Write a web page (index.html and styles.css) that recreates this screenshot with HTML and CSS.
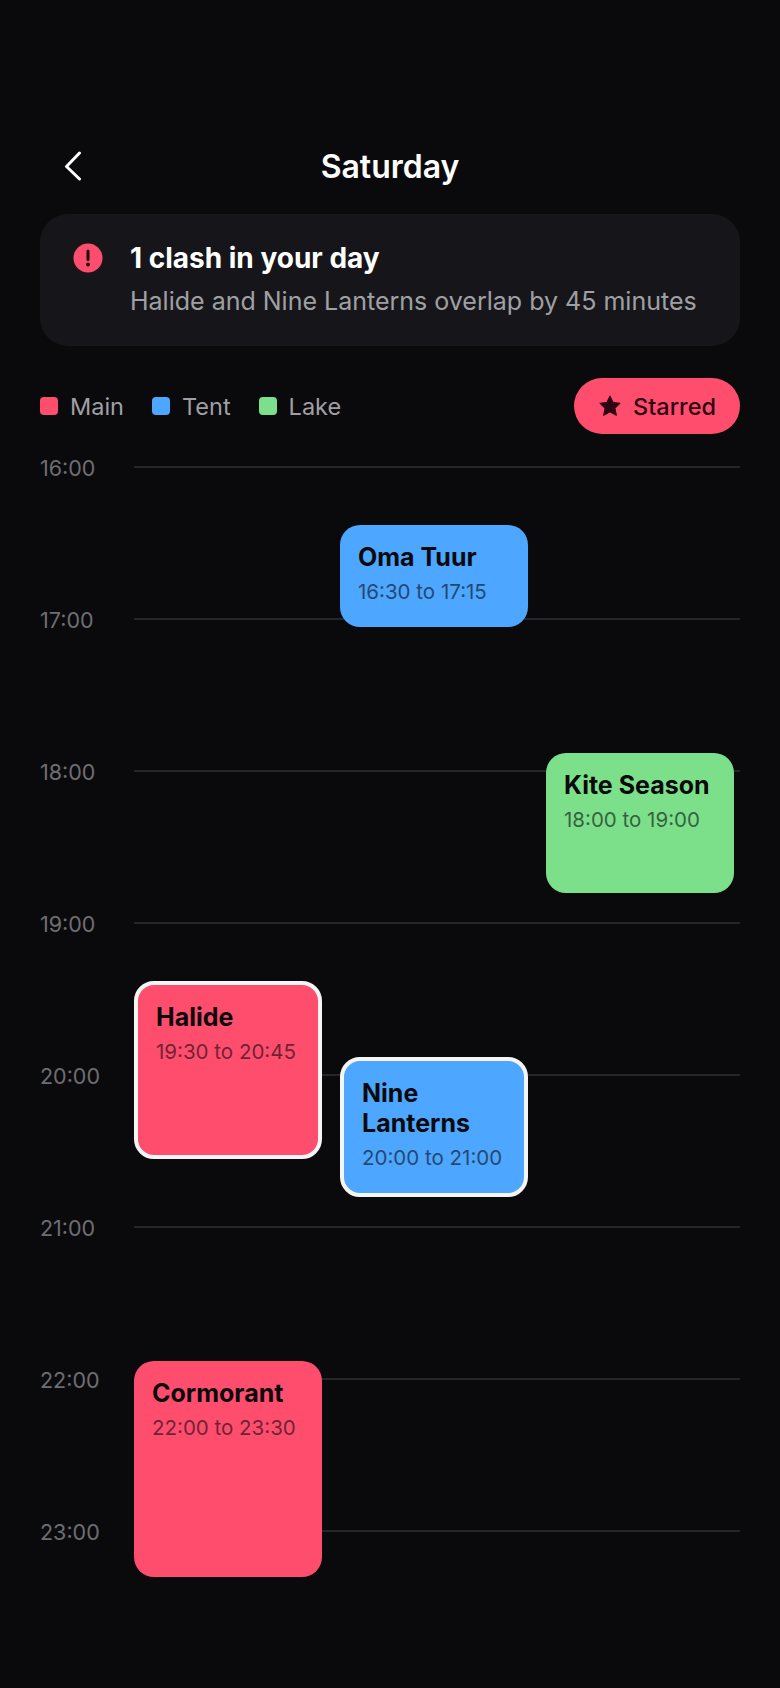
FILE: index.html
```html
<!DOCTYPE html>
<html lang="en">
<head>
<meta charset="utf-8">
<title>Saturday</title>
<link rel="stylesheet" href="styles.css">
</head>
<body>
<main class="screen">
  <header class="topbar">
    <button class="back" aria-label="Back">
      <svg width="30" height="30" viewBox="0 0 30 30" fill="none"><path d="M19.5 2 6.5 15.5l13 12.5" stroke="#fff" stroke-width="3" stroke-linecap="round" stroke-linejoin="round"/></svg>
    </button>
    <h1 class="title">Saturday</h1>
  </header>
  <section class="alert">
    <svg class="alert-icon" width="32" height="32" viewBox="0 0 32 32"><circle cx="16" cy="16" r="14.5" fill="#ff4d6d"/><path d="M16 9v8.5" stroke="#1a0a10" stroke-width="3" stroke-linecap="round"/><circle cx="16" cy="22.5" r="2" fill="#1a0a10"/></svg>
    <div class="alert-text">
      <div class="alert-title">1 clash in your day</div>
      <div class="alert-sub">Halide and Nine Lanterns overlap by 45 minutes</div>
    </div>
  </section>
  <section class="filters">
    <div class="legend"><i class="dot main"></i><span>Main</span></div>
    <div class="legend"><i class="dot tent"></i><span>Tent</span></div>
    <div class="legend"><i class="dot lake"></i><span>Lake</span></div>
    <button class="starred">
      <svg width="24" height="24" viewBox="0 0 24 24"><path d="M12 1.8l3.1 6.6 7.1.9-5.2 5 1.4 7.1-6.4-3.5-6.4 3.5 1.4-7.1-5.2-5 7.1-.9z" fill="#2f0514" stroke="#2f0514" stroke-width="1" stroke-linejoin="round"/></svg>
      <span>Starred</span>
    </button>
  </section>
  <section class="timeline">
    <div class="hour"><span class="label">16:00</span><i class="rule"></i></div>
    <div class="hour"><span class="label">17:00</span><i class="rule"></i></div>
    <div class="hour"><span class="label">18:00</span><i class="rule"></i></div>
    <div class="hour"><span class="label">19:00</span><i class="rule"></i></div>
    <div class="hour"><span class="label">20:00</span><i class="rule"></i></div>
    <div class="hour"><span class="label">21:00</span><i class="rule"></i></div>
    <div class="hour"><span class="label">22:00</span><i class="rule"></i></div>
    <div class="hour"><span class="label">23:00</span><i class="rule"></i></div>

    <article class="event tent" style="top:68.5px;height:102px;left:340px"><h2>Oma Tuur</h2><p>16:30 to 17:15</p></article>
    <article class="event lake" style="top:296.5px;height:140px;left:546px"><h2>Kite Season</h2><p>18:00 to 19:00</p></article>
    <article class="event main clash" style="top:524.5px;height:178px;left:134px"><h2>Halide</h2><p>19:30 to 20:45</p></article>
    <article class="event tent clash" style="top:600.5px;height:140px;left:340px"><h2>Nine Lanterns</h2><p>20:00 to 21:00</p></article>
    <article class="event main" style="top:904.5px;height:216px;left:134px"><h2>Cormorant</h2><p>22:00 to 23:30</p></article>
  </section>
</main>
</body>
</html>
```
FILE: styles.css
```css
* { box-sizing: border-box; }
html, body { margin: 0; padding: 0; }
body {
  background: #0a0a0d;
  font-family: Inter, "Liberation Sans", sans-serif;
  color: #fff;
}
.screen {
  width: 780px;
  height: 1688px;
  padding: 142px 40px 0;
  overflow: hidden;
}
.topbar {
  position: relative;
  height: 48px;
  display: flex;
  align-items: center;
  justify-content: center;
}
.back {
  position: absolute;
  left: 20px;
  top: 9px;
  width: 30px;
  height: 30px;
  padding: 0;
  border: 0;
  background: none;
  line-height: 0;
}
.title {
  margin: 2px 0 0;
  font-size: 32px;
  font-weight: 600;
  line-height: 48px;
}
.alert {
  margin-top: 24px;
  height: 132px;
  border-radius: 28px;
  background: #16161a;
  padding: 28px 32px;
  display: flex;
  gap: 26px;
}
.alert-icon { flex: none; }
.alert-title {
  font-size: 28px;
  font-weight: 700;
  line-height: 32px;
}
.alert-sub {
  margin-top: 11px;
  font-size: 25px;
  line-height: 32px;
  color: #a0a0a4;
}
.filters {
  margin-top: 32px;
  height: 56px;
  display: flex;
  align-items: center;
  gap: 28px;
}
.legend {
  display: flex;
  align-items: center;
  gap: 12px;
  font-size: 23.5px;
  color: #a0a0a4;
}
.dot {
  width: 18px;
  height: 18px;
  border-radius: 4px;
}
.dot.main { background: #ff4d6d; }
.dot.tent { background: #4da6ff; }
.dot.lake { background: #7ce08a; }
.starred {
  margin-left: auto;
  height: 56px;
  padding: 0 24px;
  border: 0;
  border-radius: 28px;
  background: #ff4d6d;
  color: #2f0514;
  font: 500 23.5px Inter, "Liberation Sans", sans-serif;
  display: flex;
  align-items: center;
  gap: 11px;
}
.timeline {
  position: relative;
  margin: 0 -40px;
  padding: 32px 40px 0;
}
.hour {
  height: 152px;
  display: flex;
  align-items: flex-start;
}
.label {
  width: 94px;
  flex: none;
  font-size: 21.5px;
  line-height: 28px;
  margin-top: -12px;
  color: #6e6e72;
}
.rule {
  flex: 1;
  height: 2px;
  background: #26262a;
}
.event {
  position: absolute;
  width: 188px;
  margin-top: 22px;
  padding: 17px 18px;
  border-radius: 20px;
  color: #0a0a0d;
}
.event.main { background: #ff4d6d; }
.event.tent { background: #4da6ff; }
.event.lake { background: #7ce08a; }
.event.clash {
  border: 4px solid #f5f5f5;
}
.event h2 {
  margin: 0;
  font-size: 25px;
  font-weight: 700;
  line-height: 30px;
}
.event p {
  margin: 6px 0 0;
  font-size: 20.5px;
  line-height: 28px;
  opacity: 0.6;
}
```
